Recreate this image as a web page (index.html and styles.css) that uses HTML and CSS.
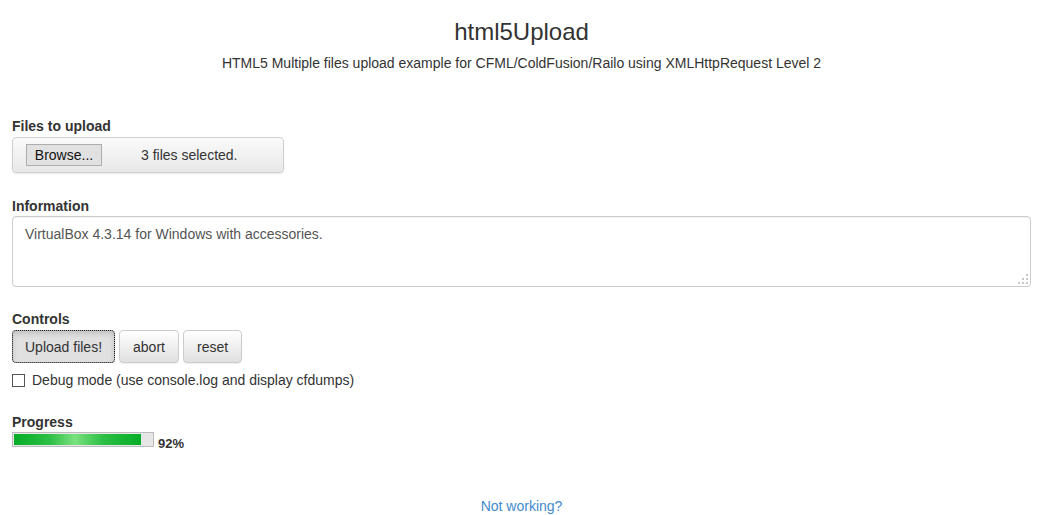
FILE: index.html
```html
<!DOCTYPE html>
<html>
<head>
<meta charset="utf-8">
<title>html5Upload</title>
<link rel="stylesheet" href="styles.css">
</head>
<body>
<div class="page">
  <header class="header">
    <h1 class="title">html5Upload</h1>
    <p class="subtitle">HTML5 Multiple files upload example for CFML/ColdFusion/Railo using XMLHttpRequest Level 2</p>
  </header>

  <section class="group group-files">
    <div class="label">Files to upload</div>
    <div class="filebox">
      <span class="browse">Browse...</span>
      <span class="filecount">3 files selected.</span>
    </div>
  </section>

  <section class="group group-info">
    <div class="label">Information</div>
    <div class="textwrap">
      <textarea class="textarea">VirtualBox 4.3.14 for Windows with accessories.</textarea>
      <svg class="grip" width="10" height="10" viewBox="0 0 10 10">
        <rect x="8" y="0" width="2" height="2" fill="#c8c8c8"/>
        <rect x="4" y="4" width="2" height="2" fill="#c8c8c8"/>
        <rect x="8" y="4" width="2" height="2" fill="#c8c8c8"/>
        <rect x="0" y="8" width="2" height="2" fill="#c8c8c8"/>
        <rect x="4" y="8" width="2" height="2" fill="#c8c8c8"/>
        <rect x="8" y="8" width="2" height="2" fill="#c8c8c8"/>
      </svg>
    </div>
  </section>

  <section class="group group-controls">
    <div class="label">Controls</div>
    <div class="buttons">
      <button class="btn btn-active">Upload files!</button>
      <button class="btn">abort</button>
      <button class="btn">reset</button>
    </div>
    <label class="check">
      <span class="box"></span>
      <span>Debug mode (use console.log and display cfdumps)</span>
    </label>
  </section>

  <section class="group group-progress">
    <div class="label">Progress</div>
    <div class="progress-row">
      <div class="progress"><div class="bar" style="width: 92%"></div></div>
      <span class="pct">92%</span>
    </div>
  </section>

  <footer class="footer">
    <a class="link" href="#">Not working?</a>
  </footer>
</div>
</body>
</html>
```

FILE: styles.css
```css
* { box-sizing: border-box; }
html, body { margin: 0; padding: 0; background: #fff; }
body {
  font-family: "Liberation Sans", Arial, sans-serif;
  font-size: 14px;
  color: #333;
  line-height: 20px;
}
.page { padding: 0 12px; }

.header { text-align: center; padding-top: 17px; }
.title {
  margin: 0;
  font-size: 24px;
  font-weight: normal;
  line-height: 30px;
  color: #333;
}
.subtitle {
  margin: 6px 0 0;
  font-size: 14px;
  line-height: 20px;
  color: #333;
}

.label { font-weight: bold; line-height: 20px; color: #333; }

.group-files { margin-top: 43px; }
.filebox {
  margin-top: 1px;
  width: 272px;
  height: 36px;
  border: 1px solid #cfcfcf;
  border-radius: 4px;
  background: linear-gradient(#fafafa, #e8e8e8);
  box-shadow: 0 1px 2px rgba(0,0,0,0.08);
  display: flex;
  align-items: center;
  padding-left: 13px;
}
.browse {
  display: inline-flex;
  align-items: center;
  justify-content: center;
  width: 76px;
  height: 22px;
  border: 1px solid #adadad;
  background: #e1e1e1;
  color: #111;
  font-size: 14px;
}
.filecount { margin-left: 39px; color: #333; }

.group-info { margin-top: 23px; }
.textwrap { position: relative; }
.textarea {
  display: block;
  width: 100%;
  height: 71px;
  margin: 0;
  border: 1px solid #ccc;
  border-radius: 4px;
  padding: 7px 12px;
  font-family: "Liberation Sans", Arial, sans-serif;
  font-size: 14px;
  line-height: 20px;
  color: #555;
  resize: none;
  box-shadow: inset 0 1px 1px rgba(0,0,0,0.05);
}
.grip { position: absolute; right: 3px; bottom: 3px; }

.group-controls { margin-top: 22px; }
.buttons { display: flex; gap: 4px; margin-top: 1px; }
.btn {
  height: 33px;
  padding: 0 12px;
  border: 1px solid #ccc;
  border-radius: 4px;
  background: linear-gradient(#ffffff, #e0e0e0);
  font-family: "Liberation Sans", Arial, sans-serif;
  font-size: 14px;
  color: #333;
  box-shadow: 0 1px 0 rgba(255,255,255,0.15) inset, 0 1px 1px rgba(0,0,0,0.075);
}
.btn:not(.btn-active) { padding: 0 13px; }
.btn-active {
  background: #e0e0e0;
  border-color: #aaa;
  outline: 1px dotted #222;
  outline-offset: -1px;
  box-shadow: inset 0 3px 5px rgba(0,0,0,0.125);
}
.check {
  display: flex;
  align-items: center;
  gap: 7px;
  margin-top: 7px;
  color: #333;
}
.box {
  width: 13px;
  height: 13px;
  border: 1px solid #555;
  background: #fff;
}

.group-progress { margin-top: 22px; }
.progress-row { display: flex; align-items: flex-start; gap: 4px; }
.progress {
  width: 142px;
  height: 15px;
  border: 1px solid #bcbcbc;
  background: #e6e6e6;
  padding: 1px;
}
.bar {
  height: 100%;
  background: linear-gradient(90deg, #06ad26 0%, #2cbf45 28%, #7ae07f 48%, #2cbf45 70%, #06ad26 100%);
}
.pct {
  font-weight: bold;
  font-size: 13px;
  line-height: 15px;
  padding-top: 4px;
  color: #333;
}

.footer { text-align: center; margin-top: 45px; }
.link { color: #428bca; text-decoration: none; }
```
